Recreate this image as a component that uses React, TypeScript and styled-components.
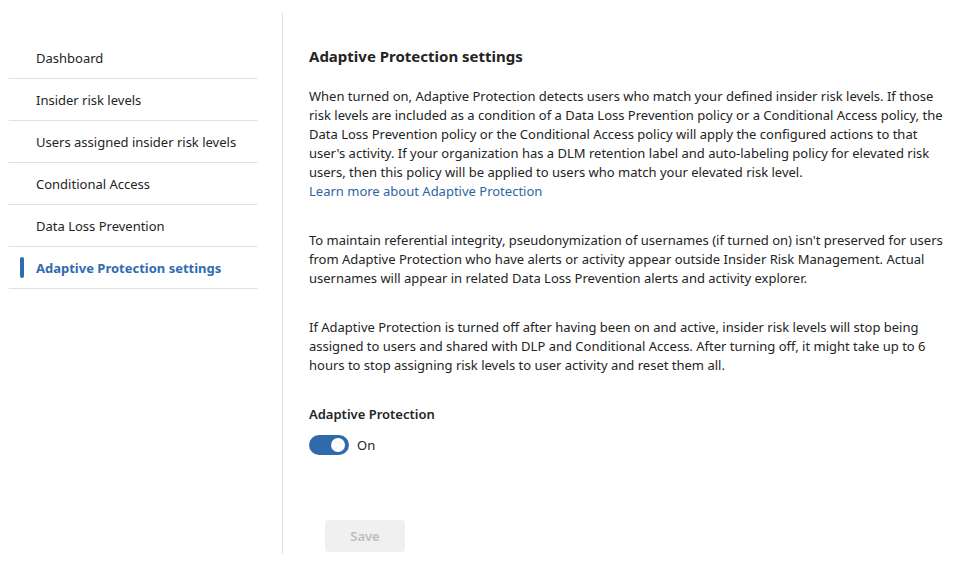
import React, { useState } from "react";
import styled, { createGlobalStyle } from "styled-components";

const GlobalStyle = createGlobalStyle`
  * { box-sizing: border-box; }
  body {
    margin: 0;
    background: #ffffff;
    color: #242424;
    font-family: "Segoe UI", "Noto Sans", "Open Sans", sans-serif;
    font-size: 13px;
    line-height: 19px;
  }
`;

const Page = styled.div`
  display: flex;
  padding: 13px 12px 21px 8px;
`;

const Nav = styled.nav`
  flex: none;
  padding: 24px 24px 0 0;
  border-right: 1px solid #e0e0e0;
`;

const NavList = styled.ul`
  width: 250px;
  margin: 0;
  padding: 0;
  list-style: none;
`;

const NavItem = styled.li`
  border-bottom: 1px solid #e0e0e0;
  border-radius: 2px;
`;

const NavLink = styled.a<{ $active: boolean }>`
  display: flex;
  align-items: flex-start;
  gap: 12px;
  padding: 10px 12px 8px;
  color: ${(p) => (p.$active ? "#2f6bb0" : "#242424")};
  font-weight: ${(p) => (p.$active ? 700 : 400)};
  line-height: 23px;
  text-decoration: none;
  white-space: nowrap;

  &::before {
    content: "";
    width: 4px;
    height: 21px;
    border-radius: 2px;
    background: ${(p) => (p.$active ? "#2f6bb0" : "transparent")};
  }
`;

const Main = styled.main`
  flex: 1;
  min-width: 0;
  padding: 32px 0 2px 26px;
`;

const Title = styled.h1`
  margin: 0 0 19px;
  font-size: 15px;
  line-height: 23px;
  font-weight: 700;
`;

const Paragraph = styled.p`
  margin: 0 0 30px;
`;

const LearnMore = styled.a`
  display: block;
  width: fit-content;
  color: #2b66a3;
  text-decoration: none;
`;

const FieldLabel = styled.label`
  display: block;
  width: fit-content;
  margin-bottom: 11px;
  font-weight: 600;
`;

const ToggleRow = styled.div`
  display: flex;
  align-items: center;
  gap: 8px;
  height: 20px;
`;

const Toggle = styled.input`
  appearance: none;
  display: flex;
  align-items: center;
  justify-content: flex-start;
  width: 40px;
  height: 20px;
  margin: 0;
  padding: 0 4px;
  border-radius: 10px;
  background: #8a8886;
  cursor: pointer;

  &::before {
    content: "";
    width: 14px;
    height: 14px;
    border-radius: 50%;
    background: #ffffff;
  }

  &:checked {
    justify-content: flex-end;
    background: #2f6bab;
  }
`;

const SaveButton = styled.button`
  display: block;
  width: 80px;
  height: 32px;
  margin: 65px 0 0 16px;
  border: 0;
  border-radius: 4px;
  background: #f0f0f0;
  color: #bdbdbd;
  font: inherit;
  font-weight: 600;
`;

const sections = [
  "Dashboard",
  "Insider risk levels",
  "Users assigned insider risk levels",
  "Conditional Access",
  "Data Loss Prevention",
  "Adaptive Protection settings",
];

export default function App() {
  const [on, setOn] = useState(true);
  const current = "Adaptive Protection settings";

  return (
    <>
      <GlobalStyle />
      <Page>
        <Nav>
          <NavList>
            {sections.map((name) => (
              <NavItem key={name}>
                <NavLink
                  href="#"
                  $active={name === current}
                  aria-current={name === current ? "page" : undefined}
                >
                  {name}
                </NavLink>
              </NavItem>
            ))}
          </NavList>
        </Nav>
        <Main>
          <Title>Adaptive Protection settings</Title>
          <Paragraph>
            When turned on, Adaptive Protection detects users who match your defined insider risk levels. If those
            risk levels are included as a condition of a Data Loss Prevention policy or a Conditional Access policy, the
            Data Loss Prevention policy or the Conditional Access policy will apply the configured actions to that
            user's activity. If your organization has a DLM retention label and auto-labeling policy for elevated risk
            users, then this policy will be applied to users who match your elevated risk level.
            <LearnMore href="#">Learn more about Adaptive Protection</LearnMore>
          </Paragraph>
          <Paragraph>
            To maintain referential integrity, pseudonymization of usernames (if turned on) isn't preserved for users
            from Adaptive Protection who have alerts or activity appear outside Insider Risk Management. Actual
            usernames will appear in related Data Loss Prevention alerts and activity explorer.
          </Paragraph>
          <Paragraph>
            If Adaptive Protection is turned off after having been on and active, insider risk levels will stop being
            assigned to users and shared with DLP and Conditional Access. After turning off, it might take up to 6
            hours to stop assigning risk levels to user activity and reset them all.
          </Paragraph>
          <FieldLabel htmlFor="adaptive-protection">Adaptive Protection</FieldLabel>
          <ToggleRow>
            <Toggle
              id="adaptive-protection"
              type="checkbox"
              role="switch"
              checked={on}
              onChange={(e) => setOn(e.target.checked)}
            />
            <span>{on ? "On" : "Off"}</span>
          </ToggleRow>
          <SaveButton type="button" disabled>
            Save
          </SaveButton>
        </Main>
      </Page>
    </>
  );
}
